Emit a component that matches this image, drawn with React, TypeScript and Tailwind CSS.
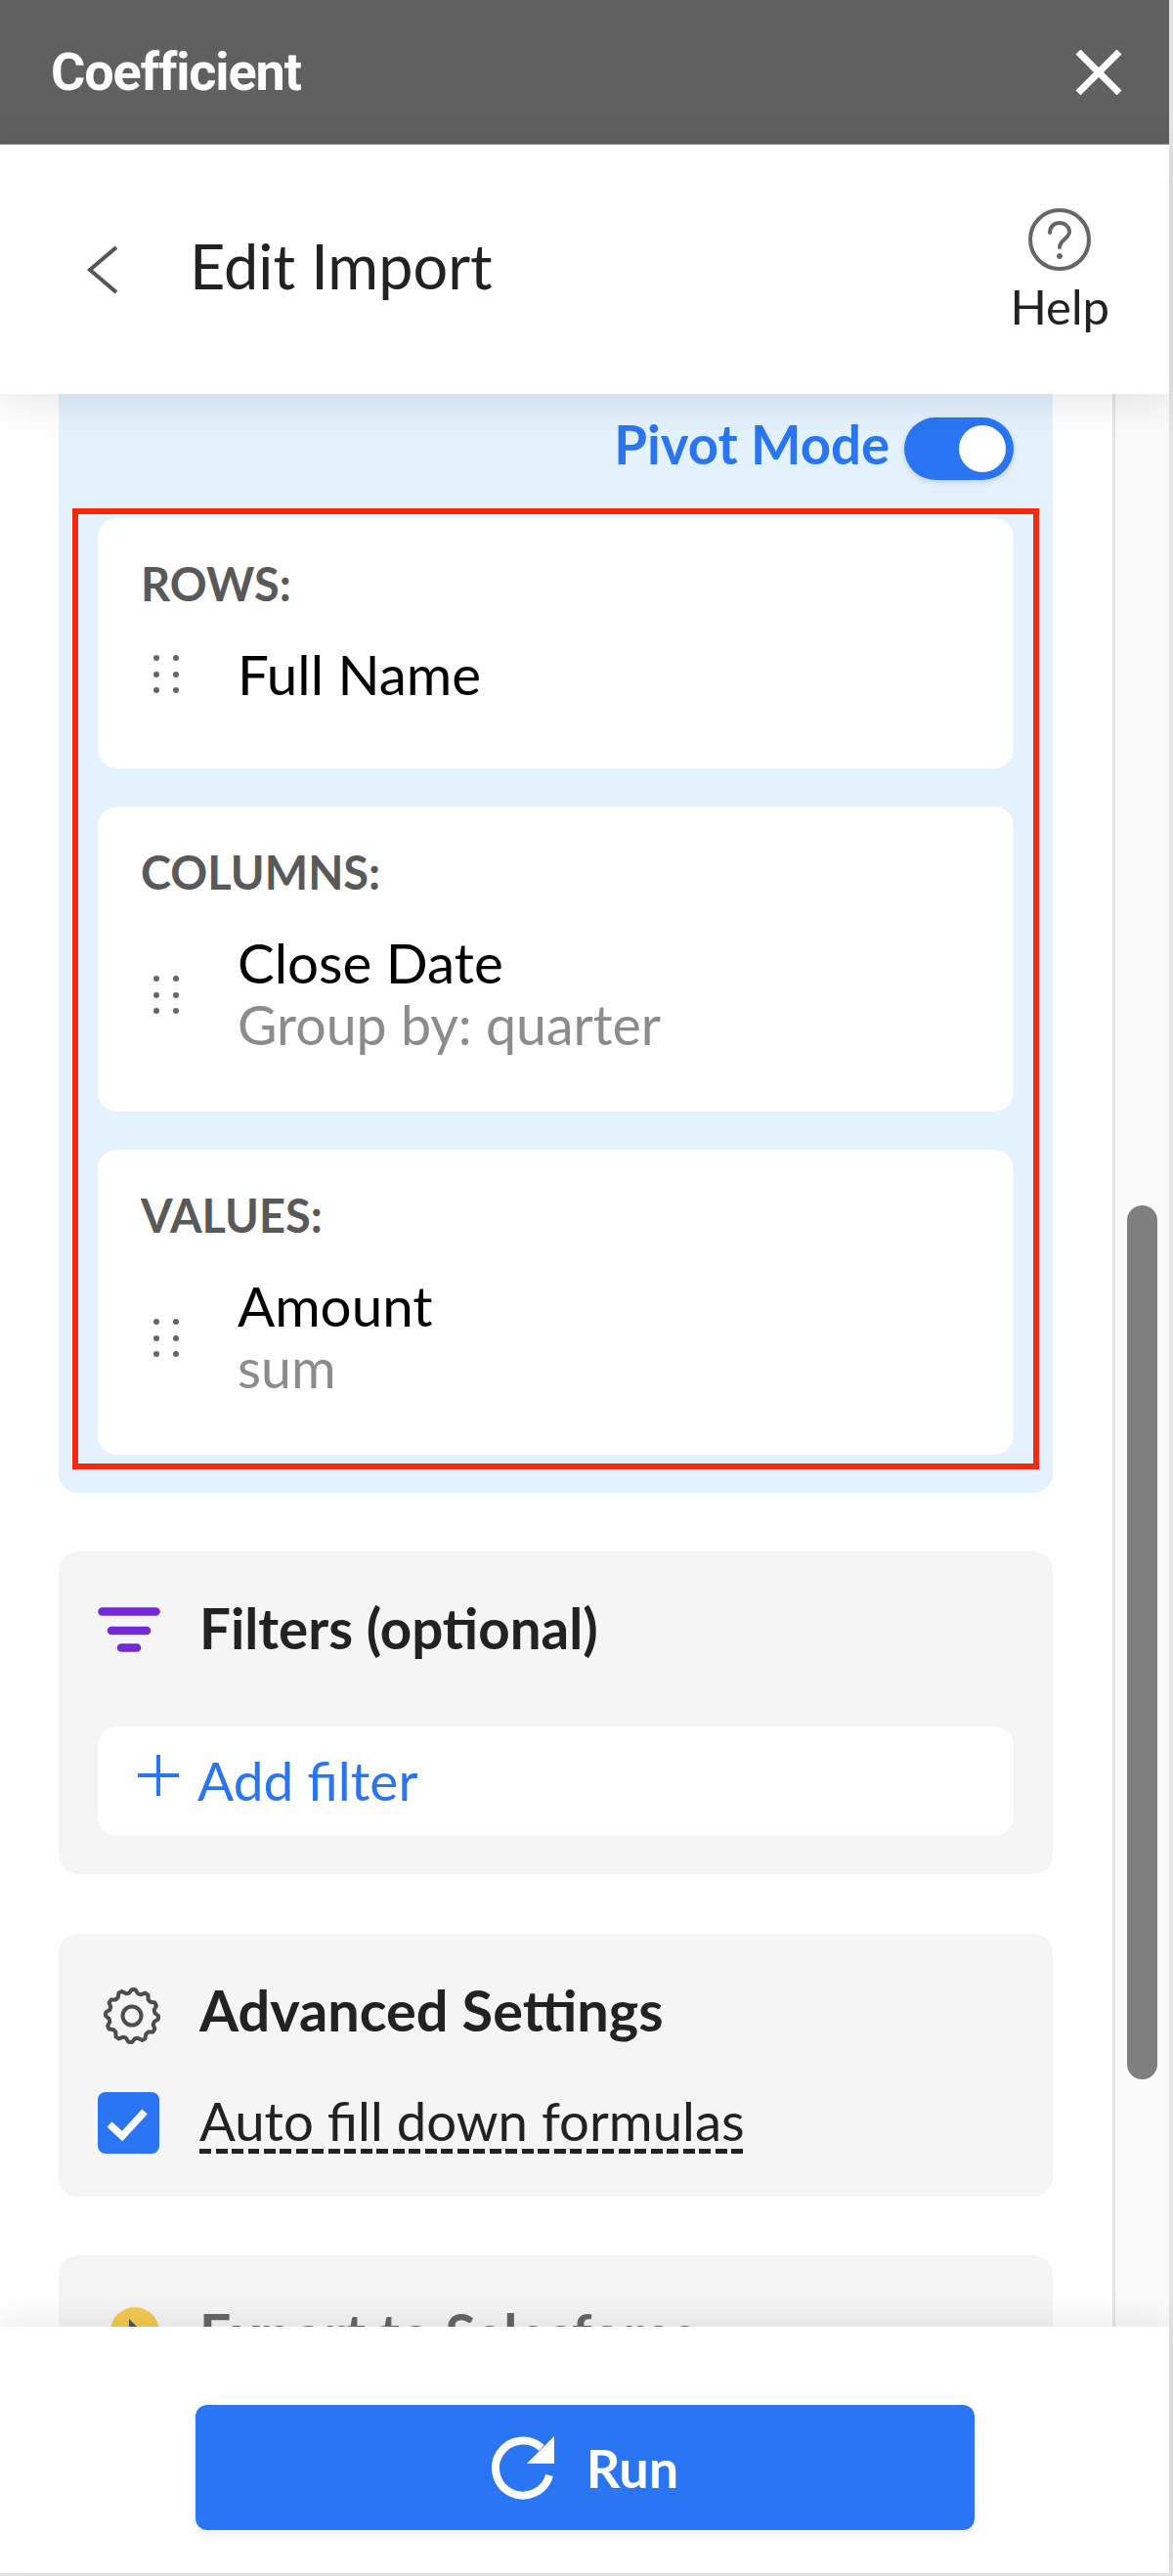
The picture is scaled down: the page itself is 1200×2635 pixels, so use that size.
import { Fragment } from 'react';

const groups = [
  { label: 'ROWS:', name: 'Full Name', sub: '', height: 'h-[256px]' },
  { label: 'COLUMNS:', name: 'Close Date', sub: 'Group by: quarter', height: 'h-[312px]' },
  { label: 'VALUES:', name: 'Amount', sub: 'sum', height: 'h-[312px]' },
];

function DragDots() {
  return (
    <svg width="28" height="40" viewBox="0 0 28 40" className="shrink-0 fill-[#666666]">
      {[4, 21, 37].map((y) => (
        <Fragment key={y}>
          <circle cx="4" cy={y} r="3" />
          <circle cx="24" cy={y} r="3" />
        </Fragment>
      ))}
    </svg>
  );
}

// scalloped gear outline, 12 teeth
const gearPath =
  Array.from({ length: 48 }, (_, i) => {
    const a = (i / 48) * Math.PI * 2;
    const r = i % 4 < 2 ? 27 : 23.5;
    return `${i === 0 ? 'M' : 'L'}${(30 + r * Math.cos(a)).toFixed(2)} ${(30 + r * Math.sin(a)).toFixed(2)}`;
  }).join('') + 'Z';

function Gear() {
  return (
    <svg width="60" height="60" viewBox="0 0 60 60" fill="none" className="shrink-0 stroke-[#4d4d4d]" strokeWidth="4" strokeLinejoin="round">
      <path d={gearPath} />
      <circle cx="30" cy="30" r="9.500" />
    </svg>
  );
}

export default function App() {
  return (
    <div className="h-[2635px] w-[1200px] overflow-hidden bg-[#e4e4e6] font-['Lato',sans-serif]">
      <div className="flex h-[2632px] w-[1196px] flex-col bg-white">
        {/* Dialog title */}
        <div className="flex h-[148px] shrink-0 items-center justify-between border-b border-[#8a8a8a] bg-[#606060] pl-[52px] pr-[48px]">
          <span className="font-['Roboto',sans-serif] text-[54px] font-bold tracking-[-1.1px] text-white">Coefficient</span>
          <svg width="48" height="46" viewBox="0 0 48 46" fill="none" stroke="white" strokeWidth="7">
            <path d="M3 2l42 42" />
            <path d="M45 2L3 44" />
          </svg>
        </div>

        {/* Page header */}
        <div className="relative z-10 flex h-[255px] shrink-0 items-center justify-between bg-white pl-[88px] pr-[61px] shadow-[0_8px_40px_rgba(0,0,0,0.1)]">
          <div className="flex items-center">
            <svg width="34" height="50" viewBox="0 0 34 50" fill="none" className="stroke-[#555555]" strokeWidth="4">
              <path d="M31 2L4 25l27 23" />
            </svg>
            <span className="mb-[6px] ml-[72px] text-[63px] text-[#222222]">Edit Import</span>
          </div>
          <div className="flex flex-col items-center pt-[2px]">
            <svg width="66" height="66" viewBox="0 0 66 66" fill="none" className="stroke-[#666666]">
              <circle cx="33" cy="33" r="30" strokeWidth="4" />
              <path d="M23 26c0-6 4.500-10 10-10s10 4 10 9c0 7-10 8-10 16" strokeWidth="4" strokeLinecap="round" />
              <circle cx="33" cy="50" r="2.500" className="fill-[#666666]" strokeWidth="1" />
            </svg>
            <span className="mt-[7px] text-[49px] leading-[56px] text-[#222222]">Help</span>
          </div>
        </div>

        {/* Body */}
        <div className="flex min-h-0 flex-1 overflow-hidden">
          <div className="w-[1138px] shrink-0 pl-[60px] pr-[61px]">
            <div className="rounded-b-[20px] bg-[#e3f2fd] pb-[24px] pt-[24px]">
              <div className="flex h-[64px] items-center justify-end pr-[40px]">
                <span className="mb-[8px] mr-[15px] text-[54.500px] font-bold text-[#2a75f3]">Pivot Mode</span>
                <div className="flex h-[64px] w-[112px] items-center justify-end rounded-full bg-[#2a75f3] pr-[8px] shadow-[0_2px_6px_rgba(0,0,0,0.15)]">
                  <div className="h-[48px] w-[48px] rounded-full bg-white" />
                </div>
              </div>

              <div className="mx-[14px] mt-[29px] flex flex-col gap-[39px] border-[6px] border-[#f5290c] px-[20px] pb-[9px] pt-[4px]">
                {groups.map((g) => (
                  <div key={g.label} className={`${g.height} rounded-[20px] bg-white pl-[44px] pt-[45px]`}>
                    <div className="text-[47px] font-bold leading-[44px] text-[#595959]">{g.label}</div>
                    <div className="mt-[39px] flex items-center gap-[59px] pl-[12px]">
                      <DragDots />
                      <div>
                        <div className="text-[56.500px] leading-[62px] text-black">{g.name}</div>
                        {g.sub && <div className="text-[55.500px] leading-[66px] text-[#8c8c8c]">{g.sub}</div>}
                      </div>
                    </div>
                  </div>
                ))}
              </div>
            </div>

            {/* Filters */}
            <div className="mt-[60px] h-[330px] rounded-[20px] bg-[#f5f5f5] px-[40px] pt-[48px]">
              <div className="flex h-[64px] items-center">
                <svg width="64" height="46" viewBox="0 0 64 46" className="shrink-0 stroke-[#7329d3]" fill="none" strokeWidth="8.500" strokeLinecap="round">
                  <path d="M4.500 4.500h55" />
                  <path d="M14 24h36" />
                  <path d="M24 41.500h16" />
                </svg>
                <span className="mb-[4px] ml-[40px] text-[56.500px] font-bold text-[#222222]">Filters (optional)</span>
              </div>
              <div className="mt-[67px] flex h-[112px] items-center rounded-[20px] bg-white pl-[41px]">
                <svg width="42" height="42" viewBox="0 0 42 42" fill="none" className="mb-[12px] shrink-0 stroke-[#2a75f3]" strokeWidth="4">
                  <path d="M21 0v42" />
                  <path d="M0 21h42" />
                </svg>
                <span className="mb-[2px] ml-[19px] text-[55px] text-[#2a75f3]">Add filter</span>
              </div>
            </div>

            {/* Advanced settings */}
            <div className="mt-[61px] h-[269px] rounded-[20px] bg-[#f5f5f5] px-[40px] pt-[48px]">
              <div className="flex h-[64px] items-center">
                <div className="ml-[5px] mt-[8px]">
                  <Gear />
                </div>
                <span className="mb-[4px] ml-[39px] text-[57.700px] font-bold text-[#222222]">Advanced Settings</span>
              </div>
              <div className="mt-[50px] flex items-center">
                <div className="flex h-[63px] w-[63px] items-center justify-center rounded-[8px] bg-[#2a75f3]">
                  <svg width="63" height="63" viewBox="0 0 63 63" fill="none" stroke="white" strokeWidth="7.500">
                    <path d="M12 33l13 12 23-25" />
                  </svg>
                </div>
                <div className="ml-[41px] flex flex-col">
                  <span className="text-[54.500px] leading-[58px] text-[#222222]">Auto fill down formulas</span>
                  <div className="h-[5px] bg-[repeating-linear-gradient(90deg,#222222_0,#222222_12px,transparent_12px,transparent_16.500px)]" />
                </div>
              </div>
            </div>

            {/* Export */}
            <div className="mt-[60px] h-[200px] rounded-[20px] bg-[#f5f5f5] pl-[53px] pt-[53px]">
              <div className="flex items-start">
                <svg width="50" height="50" viewBox="0 0 50 50" className="shrink-0">
                  <circle cx="25" cy="25" r="25" fill="#f3c94f" />
                  <path d="M19 12l14 14-14 14z" fill="#555555" />
                </svg>
                <span className="ml-[41px] text-[57px] font-bold leading-[54px] text-[#666666]">Export to Salesforce</span>
              </div>
            </div>
          </div>

          {/* Scrollbar */}
          <div className="flex-1 border-l-[3px] border-[#e5e5e5] bg-[#fafafa] pl-[12px] pt-[830px]">
            <div className="h-[894px] w-[31px] rounded-full bg-[#7f7f7f]" />
          </div>
        </div>

        {/* Footer */}
        <div className="relative z-10 h-[252px] shrink-0 bg-white pt-[80px] shadow-[0_-8px_30px_rgba(0,0,0,0.08)]">
          <button className="mx-auto flex h-[128px] w-[797px] items-center justify-center rounded-[12px] bg-[#2a75f3] shadow-[0_4px_8px_rgba(0,0,0,0.08)]">
            <svg width="66" height="66" viewBox="0 0 66 66" fill="none">
              <path d="M60 41A28 28 0 1 1 52 13" stroke="white" strokeWidth="8" />
              <path d="M65 1v28H37z" fill="white" />
            </svg>
            <span className="ml-[32px] text-[54px] font-bold text-white">Run</span>
          </button>
        </div>
      </div>
    </div>
  );
}
